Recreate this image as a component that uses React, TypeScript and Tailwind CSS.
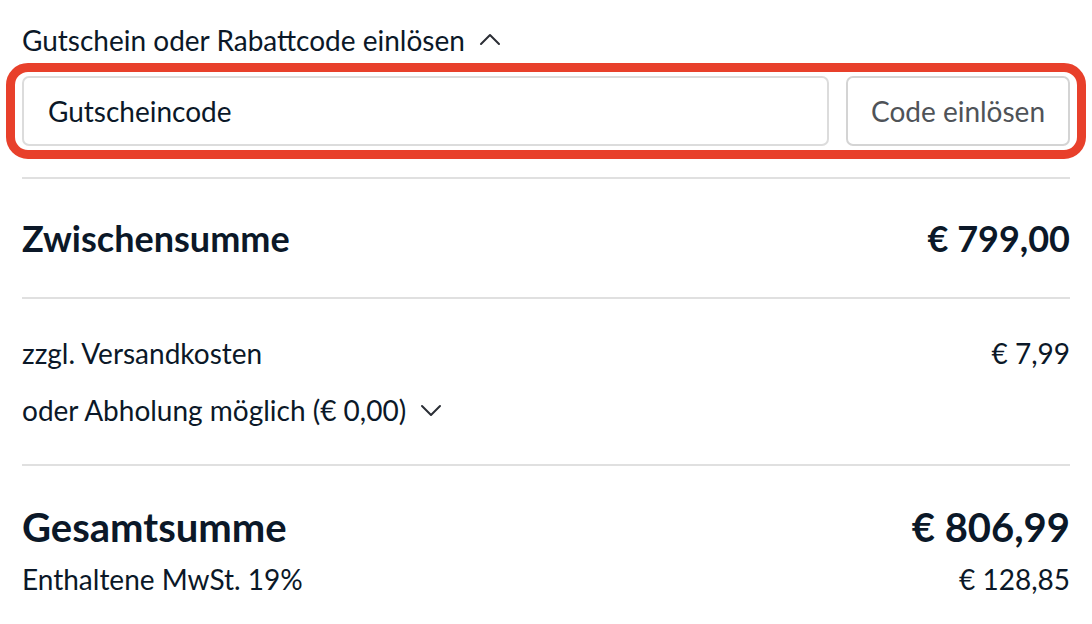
import { useState } from "react";

const Chevron = ({ up }: { up?: boolean }) => (
  <svg
    viewBox="0 0 24 24"
    className="w-[24px] h-[24px] text-[#2b2f36]"
    fill="none"
    stroke="currentColor"
    strokeWidth={2}
    strokeLinecap="round"
    strokeLinejoin="round"
  >
    {up ? <polyline points="3,16 12,7 21,16" /> : <polyline points="3,8 12,17 21,8" />}
  </svg>
);

const App = () => {
  const [code, setCode] = useState("");

  return (
    <div className="w-full min-h-screen bg-white font-['Lato',sans-serif] text-[#0b1828]">
      <div className="px-[22px] pt-[22px]">
        {/* Voucher toggle */}
        <button className="flex items-center gap-[13px] text-[28px] leading-[36px]">
          Gutschein oder Rabattcode einlösen
          <Chevron up />
        </button>

        {/* Voucher form (highlighted) */}
        <div className="-mx-[16px] mt-[5px] rounded-[22px] border-[9px] border-[#e8402b] px-[7px] py-[4px]">
          <div className="flex gap-[17px]">
            <input
              value={code}
              onChange={(e) => setCode(e.target.value)}
              placeholder="Gutscheincode"
              className="flex-1 h-[70px] rounded-[7px] border-2 border-[#dcdcdc] px-[24px] text-[28px] text-[#0b1828] placeholder:text-[#0b1828] outline-none"
            />
            <button className="w-[224px] h-[70px] rounded-[7px] border-2 border-[#d4d4d4] text-[28px] text-[#4f5358]">
              Code einlösen
            </button>
          </div>
        </div>

        <div className="mt-[18px] border-t-2 border-[#e0e0e0]" />

        {/* Subtotal */}
        <div className="flex items-center justify-between h-[118px] text-[36px] font-bold">
          <span>Zwischensumme</span>
          <span>€ 799,00</span>
        </div>

        <div className="border-t-2 border-[#e0e0e0]" />

        {/* Shipping */}
        <div className="pt-[36px] pb-[36px]">
          <div className="flex items-center justify-between text-[28px] leading-[36px]">
            <span>zzgl. Versandkosten</span>
            <span>€ 7,99</span>
          </div>
          <button className="mt-[21px] flex items-center gap-[13px] text-[28px] leading-[36px]">
            oder Abholung möglich (€ 0,00)
            <Chevron />
          </button>
        </div>

        <div className="border-t-2 border-[#e0e0e0]" />

        {/* Total */}
        <div className="pt-[37px]">
          <div className="flex items-center justify-between text-[40px] font-bold leading-[48px]">
            <span>Gesamtsumme</span>
            <span>€ 806,99</span>
          </div>
          <div className="mt-[10px] flex items-center justify-between text-[28px] leading-[36px]">
            <span>Enthaltene MwSt. 19%</span>
            <span>€ 128,85</span>
          </div>
        </div>
      </div>
    </div>
  );
};

export default App;
